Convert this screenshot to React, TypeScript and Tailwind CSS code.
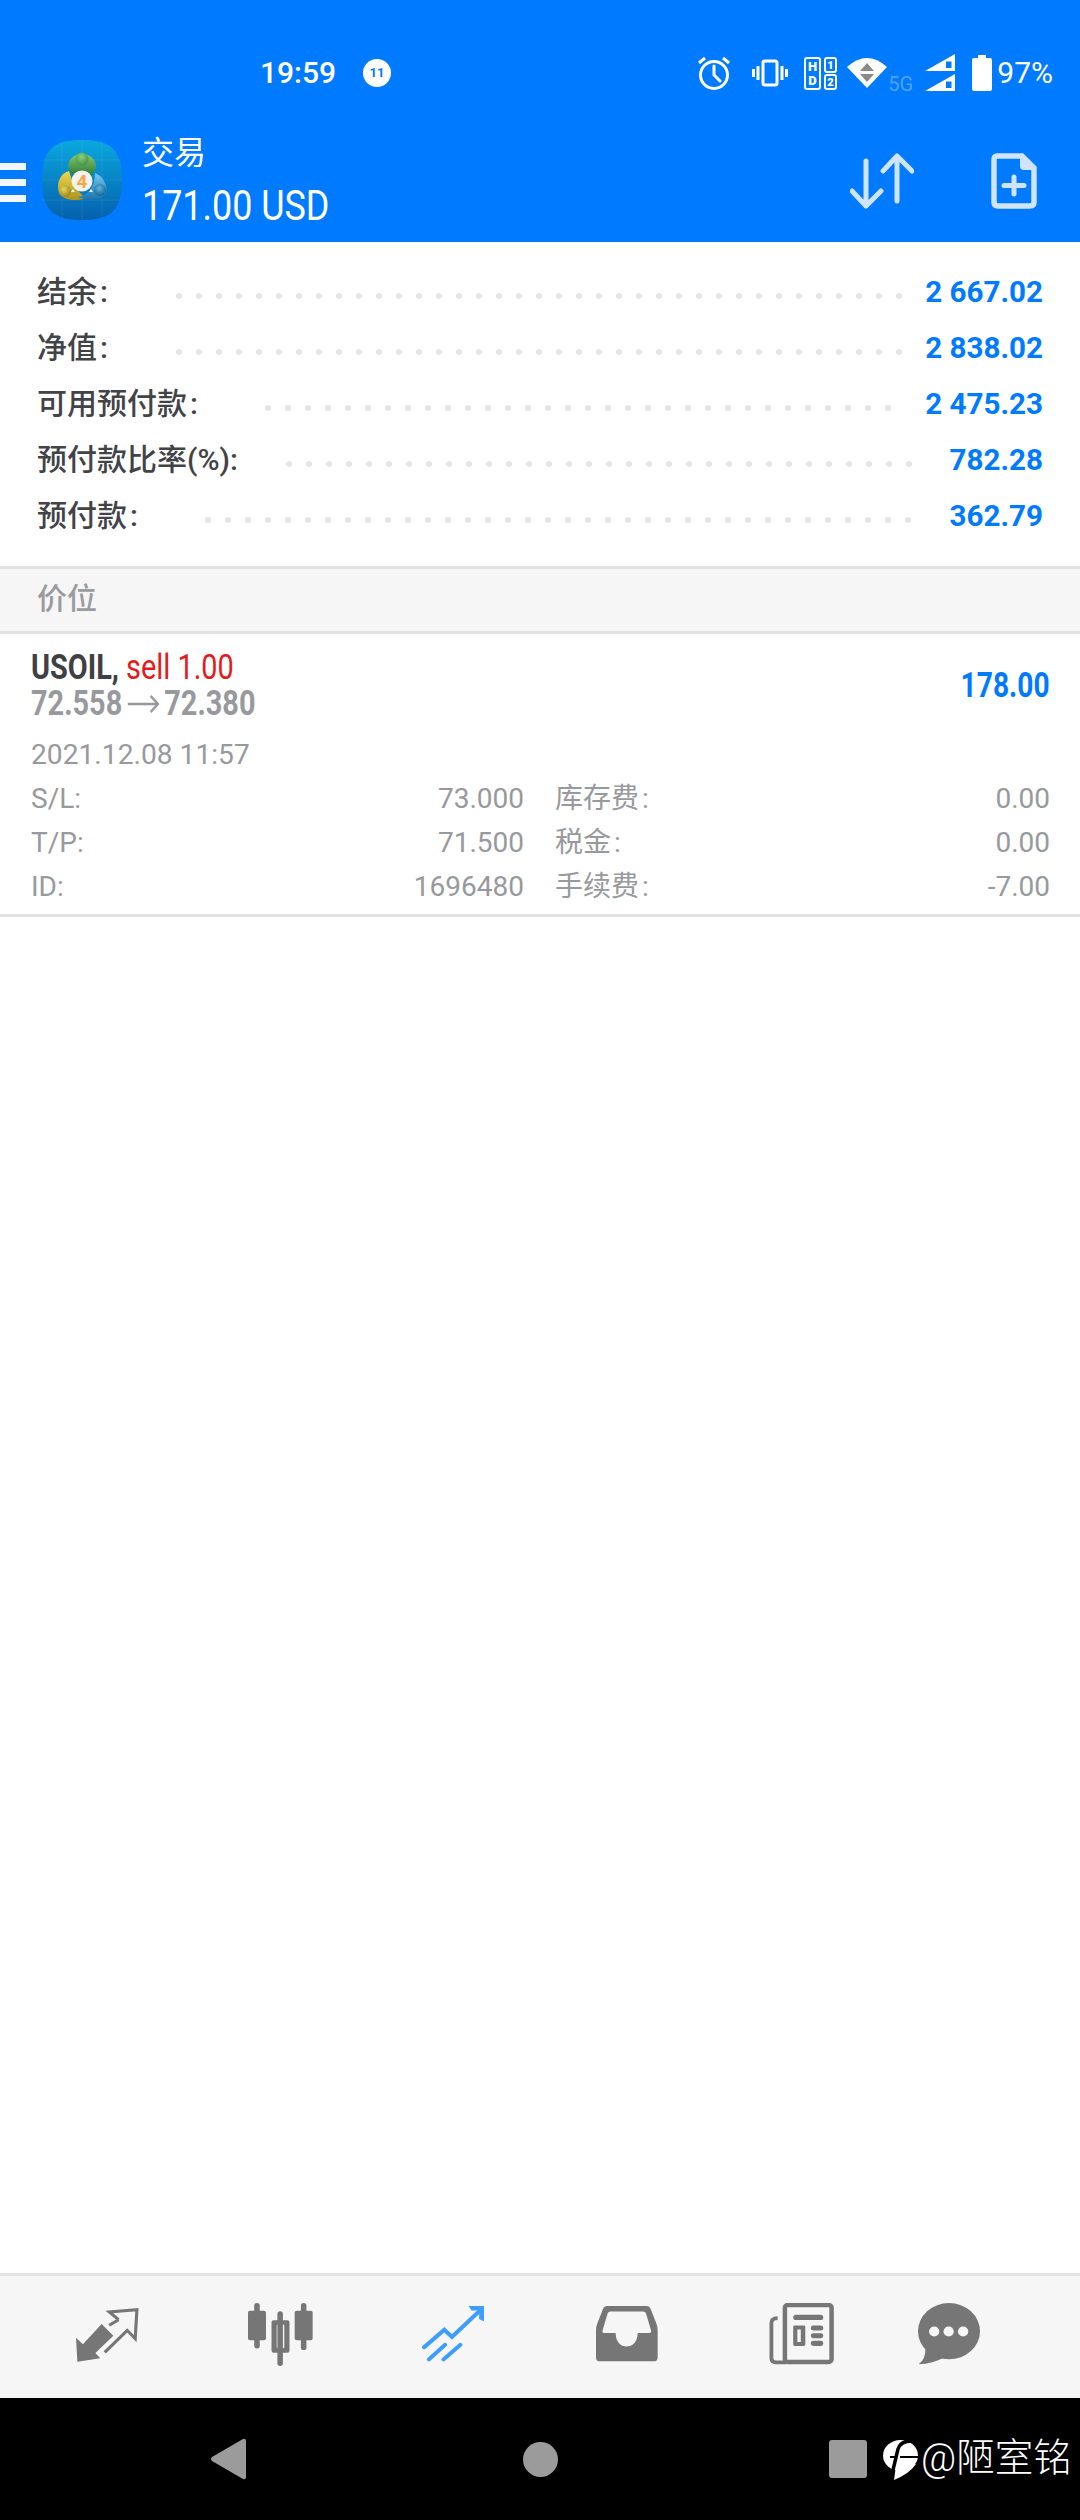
const FONT = "font-['Roboto','Noto_Sans_CJK_SC',sans-serif]";

type SummaryRow = {
  label: string;
  colon: string;
  value: string;
  labelWidth: string;
  dots: number;
};

const summaryRows: SummaryRow[] = [
  { label: "结余", colon: "ml-[3px]", value: "2 667.02", labelWidth: "w-[139px]", dots: 37 },
  { label: "净值", colon: "ml-[3px]", value: "2 838.02", labelWidth: "w-[139px]", dots: 37 },
  { label: "可用预付款", colon: "ml-[3px]", value: "2 475.23", labelWidth: "w-[228px]", dots: 32 },
  { label: "预付款比率(%)", colon: "ml-0", value: "782.28", labelWidth: "w-[249px]", dots: 32 },
  { label: "预付款", colon: "ml-[3px]", value: "362.79", labelWidth: "w-[168px]", dots: 36 },
];

const details = [
  { label: "S/L:", value: "73.000", feeLabel: "库存费", fee: "0.00" },
  { label: "T/P:", value: "71.500", feeLabel: "税金", fee: "0.00" },
  { label: "ID:", value: "1696480", feeLabel: "手续费", fee: "-7.00" },
];

function AppLogo() {
  return (
    <svg width="80" height="80" viewBox="0 0 80 80" className="ml-[16px] shrink-0">
      <defs>
        <linearGradient id="mt-bg" x1="0" y1="0" x2="0" y2="1">
          <stop offset="0" stopColor="#0aa8de" />
          <stop offset="1" stopColor="#0560ae" />
        </linearGradient>
        <linearGradient id="mt-green" x1="0" y1="0" x2="0" y2="1">
          <stop offset="0" stopColor="#86c971" />
          <stop offset="1" stopColor="#2b7a37" />
        </linearGradient>
        <linearGradient id="mt-yellow" x1="0" y1="0" x2="0" y2="1">
          <stop offset="0" stopColor="#ecd94f" />
          <stop offset="1" stopColor="#ad9320" />
        </linearGradient>
        <linearGradient id="mt-blue" x1="0" y1="0" x2="0" y2="1">
          <stop offset="0" stopColor="#79c8ee" />
          <stop offset="1" stopColor="#1b74ab" />
        </linearGradient>
        <radialGradient id="mt-head-green" cx="0.45" cy="0.35" r="0.7">
          <stop offset="0" stopColor="#8fd07c" />
          <stop offset="1" stopColor="#3c8f42" />
        </radialGradient>
        <radialGradient id="mt-head-yellow" cx="0.4" cy="0.35" r="0.7">
          <stop offset="0" stopColor="#e8d65a" />
          <stop offset="1" stopColor="#98821c" />
        </radialGradient>
        <radialGradient id="mt-head-blue" cx="0.45" cy="0.35" r="0.7">
          <stop offset="0" stopColor="#5fb4dc" />
          <stop offset="1" stopColor="#125f90" />
        </radialGradient>
      </defs>
      <path d="M40 0C69 0 80 10 80 40S69 80 40 80 0 70 0 40 11 0 40 0Z" fill="url(#mt-bg)" />
      <path d="M20 1V79M40 0V80M60 1V79M0 20H80M0 40H80M0 60H80" stroke="#fff" strokeOpacity="0.07" strokeWidth="1" />
      <path d="M26 28C26 18 33 14 40 14S54 18 54 28L49 36H31Z" fill="url(#mt-green)" />
      <circle cx="40" cy="19" r="6.500" fill="url(#mt-head-green)" />
      <path d="M27 31C18 33 14 44 17 53 20 60 34 62 44 58 38 54 31 46 27 31Z" fill="url(#mt-yellow)" />
      <circle cx="23" cy="51" r="6" fill="url(#mt-head-yellow)" />
      <path d="M53 33C61 36 66 45 64 53 60 60 48 62 36 57 46 56 53 47 53 33Z" fill="url(#mt-blue)" />
      <circle cx="58" cy="50" r="6" fill="url(#mt-head-blue)" />
      <path d="M31 49L33 52H29ZM49 49L47 52H51Z" fill="#eef3f0" />
      <circle cx="40" cy="41" r="10.500" fill="#f3f2ee" />
      <text x="40" y="48" textAnchor="middle" fontSize="19" fontWeight="700" fill="#f4a84a" fontFamily="Roboto">
        4
      </text>
    </svg>
  );
}

function StatusIcons() {
  return (
    <div className="flex items-center">
      <svg width="34" height="36" viewBox="0 0 34 36" fill="none" stroke="#fff" strokeWidth="3">
        <circle cx="17" cy="20" r="13.500" />
        <path d="M17 11V20L23 26" strokeLinecap="round" />
        <path d="M2 8L8 3M32 8L26 3" />
      </svg>
      <svg width="36" height="28" viewBox="0 0 36 28" fill="none" stroke="#fff" strokeWidth="3" className="ml-[21px]">
        <rect x="11" y="2" width="14" height="24" rx="2" />
        <path d="M6 7V21M30 7V21M1.500 10V18M34.500 10V18" />
      </svg>
      <svg width="33" height="33" viewBox="0 0 33 33" className="ml-[16px]">
        <g fill="none" stroke="#fff" strokeWidth="2">
          <rect x="1" y="1" width="15" height="31" rx="2" />
          <rect x="21" y="1" width="11" height="14" rx="2" />
          <rect x="21" y="18" width="11" height="14" rx="2" />
        </g>
        <g fill="#fff" fontFamily="Roboto" fontWeight="900" textAnchor="middle">
          <text x="8.500" y="14" fontSize="13">H</text>
          <text x="8.500" y="28" fontSize="13">D</text>
          <text x="26.500" y="12" fontSize="11">1</text>
          <text x="26.500" y="29" fontSize="11">2</text>
        </g>
      </svg>
      <svg width="40" height="32" viewBox="0 0 40 32" className="ml-[10px] mt-[-2px]">
        <path d="M0 11Q20 -7 40 11L20 32Z" fill="#fff" />
        <path d="M20 7L27 15H13Z M13 18H27L20 26Z" fill="#8a8a86" />
      </svg>
      <span className="ml-[1px] mt-[22px] w-[26px] text-[20px] leading-[20px] text-[#4fa3ff]">5G</span>
      <svg width="31" height="38" viewBox="0 0 31 38" className="ml-[11px]">
        <path d="M0 17L30 0V17ZM0 37L30 20V37Z" fill="#fff" />
        <path d="M21 7.500H26.500V14H21ZM21 27.500H26.500V34H21Z" fill="#007aff" />
      </svg>
      <svg width="20" height="36" viewBox="0 0 20 36" className="ml-[16px]">
        <path d="M6 0H14V3H18Q20 3 20 5V34Q20 36 18 36H2Q0 36 0 34V5Q0 3 2 3H6Z" fill="#fff" />
      </svg>
      <span className="ml-[5px] text-[30px] leading-[36px] text-white">97%</span>
    </div>
  );
}

function Header() {
  return (
    <header className="h-[242px] shrink-0 bg-[#007aff] text-white">
      <div className="flex h-[118px] items-center pl-[260px] pr-[27px] pt-[28px]">
        <span className="w-[103px] text-[30px] font-medium leading-[36px]">19:59</span>
        <span className="flex h-[28px] w-[28px] items-center justify-center rounded-full bg-white text-[13px] font-bold text-[#007aff]">
          11
        </span>
        <div className="flex-1" />
        <StatusIcons />
      </div>
      <div className="flex h-[124px] items-start">
        <div className="mt-[45px] flex w-[26px] flex-col gap-[9px]">
          <div className="h-[7px] bg-[#f2f7ff]" />
          <div className="h-[7px] bg-[#f2f7ff]" />
          <div className="h-[7px] bg-[#f2f7ff]" />
        </div>
        <div className="mt-[22px]">
          <AppLogo />
        </div>
        <div className="ml-[20px] mt-[15px]">
          <div className="text-[32px] leading-[40px]">交易</div>
          <div className="mt-[7px] origin-left scale-x-[0.835] whitespace-nowrap text-[43px] leading-[50px]">171.00 USD</div>
        </div>
        <svg width="64" height="56" viewBox="0 0 64 56" fill="none" stroke="#cfe4ff" strokeWidth="5" strokeLinecap="round" strokeLinejoin="round" className="ml-auto mt-[35px]">
          <path d="M16 8V53M2 38L16 53L31 38" />
          <path d="M47 3V48M33 18L47 3L62 18" />
        </svg>
        <svg width="46" height="56" viewBox="0 0 46 56" className="ml-[77px] mr-[43px] mt-[35px]">
          <path d="M6 3H31L43 15V49Q43 53 39 53H7Q3 53 3 49V7Q3 3 6 3Z" fill="none" stroke="#cfe4ff" strokeWidth="5.500" />
          <path d="M29 2L44 17H33Q29 17 29 13Z" fill="#cfe4ff" />
          <path d="M23 24V41M13 32.500H33" stroke="#cfe4ff" strokeWidth="5" strokeLinecap="round" />
        </svg>
      </div>
    </header>
  );
}

function Summary() {
  return (
    <section className="h-[324px] shrink-0 pl-[37px] pr-[37px] pt-[22px]">
      {summaryRows.map((row) => (
        <div key={row.label} className="flex h-[56px] items-center">
          <span className={`${row.labelWidth} shrink-0 text-[30px] font-medium leading-[40px] text-[#424347]`}>
            {row.label}
            <span className={row.colon}>:</span>
          </span>
          <div className="mt-[7px] flex gap-[14px]">
            {Array.from({ length: row.dots }).map((_, i) => (
              <span key={i} className="h-[6px] w-[6px] rounded-full bg-[#e6e6e6]" />
            ))}
          </div>
          <span className="ml-auto text-[29.6px] font-bold leading-[40px] text-[#007aff]">{row.value}</span>
        </div>
      ))}
    </section>
  );
}

function PositionItem() {
  return (
    <section className="h-[283px] shrink-0 border-b-[3px] border-[#e3e3e3] pl-[31px] pr-[30px]">
      <div className="flex items-center justify-between pt-[16px]">
        <div>
          <div className="origin-left scale-x-[0.825] whitespace-nowrap text-[35px] leading-[36px]">
            <span className="font-bold text-[#3f4044]">USOIL, </span>
            <span className="text-[#e31b1b]">sell 1.00</span>
          </div>
          <div className="flex h-[36px] origin-left scale-x-[0.825] items-center whitespace-nowrap text-[35px] font-bold leading-[36px] text-[#98999d]">
            <span>72.558</span>
            <svg width="39" height="18" viewBox="0 0 39 18" fill="none" stroke="#98999d" strokeWidth="2.500" className="mx-[6px]">
              <path d="M0 9H37M28 1L37 9L28 17" />
            </svg>
            <span>72.380</span>
          </div>
        </div>
        <span className="origin-right scale-x-[0.805] text-[35px] font-bold leading-[36px] text-[#007aff]">178.00</span>
      </div>
      <div className="mt-[11px] h-[44px] text-[28.2px] leading-[44px] text-[#98999d]">2021.12.08 11:57</div>
      {details.map((row) => (
        <div key={row.label} className="flex h-[44px] items-center text-[28px] leading-[44px] text-[#98999d]">
          <span>{row.label}</span>
          <span className="ml-auto w-[300px] text-right">{row.value}</span>
          <span className="ml-[31px] w-[160px]">
            {row.feeLabel}
            <span className="ml-[3px]">:</span>
          </span>
          <span className="w-[335px] text-right">{row.fee}</span>
        </div>
      ))}
    </section>
  );
}

function BottomTabs() {
  return (
    <nav className="flex h-[125px] shrink-0 items-start border-t-[3px] border-[#e3e3e3] bg-[#f6f6f6] pl-[76px]">
      <svg width="63" height="54" viewBox="222 145 182 162" preserveAspectRatio="none" className="mt-[32px]">
        <path d="M296 193L330 228L278 280L292 296L226 306L222 234L242 254Z" fill="#767676" />
        <path d="M345 180L318 157L398 150L393 237L370 212L305 278M345 180L318 197" fill="none" stroke="#767676" strokeWidth="9" />
      </svg>
      <svg width="65" height="63" viewBox="720 130 188 190" preserveAspectRatio="none" className="ml-[109px] mt-[27px]">
        <g fill="#767676">
          <rect x="720" y="153" width="52" height="89" rx="6" />
          <rect x="738" y="130" width="16" height="137" rx="8" />
          <rect x="855" y="153" width="52" height="89" rx="6" />
          <rect x="873" y="130" width="16" height="142" rx="8" />
          <rect x="805" y="155" width="16" height="165" rx="8" />
          <path fillRule="evenodd" d="M794 182H834Q840 182 840 188V274Q840 280 834 280H794Q788 280 788 274V188Q788 182 794 182ZM807 195Q803 195 803 199V263Q803 267 807 267H821Q825 267 825 263V199Q825 195 821 195Z" />
        </g>
      </svg>
      <svg width="62" height="56" viewBox="1226 138 178 170" preserveAspectRatio="none" className="ml-[109px] mt-[30px]">
        <g fill="none" stroke="#3d9eff" strokeWidth="12" strokeLinecap="round">
          <path d="M1232 263L1290 210L1312 232L1392 152" />
          <path d="M1246 300L1292 256M1288 300L1336 256" />
        </g>
        <path d="M1360 138H1404V184L1390 178V152H1368Z" fill="#3d9eff" />
      </svg>
      <svg width="62" height="56" viewBox="163 138 180 170" preserveAspectRatio="none" className="ml-[112px] mt-[30px]">
        <path
          fillRule="evenodd"
          fill="#767676"
          d="M195 138H310Q318 138 322 148L338 190Q342 200 342 212V295Q342 306 330 306H175Q163 306 163 295V212Q163 200 167 190L183 148Q187 138 195 138ZM205 155H300Q306 155 308 160L323 212Q324 220 316 220H284C284 275 220 275 220 220H188Q180 220 182 212L197 160Q199 155 205 155Z"
        />
      </svg>
      <svg width="65" height="62" viewBox="665 130 188 185" preserveAspectRatio="none" className="ml-[111px] mt-[27px]">
        <g fill="none" stroke="#767676">
          <rect x="711" y="136" width="135" height="170" rx="8" strokeWidth="13" />
          <path d="M690 175Q672 175 672 190V295Q672 307 685 307H715" strokeWidth="11" />
        </g>
        <g fill="#767676">
          <rect x="735" y="165" width="87" height="16" rx="8" />
          <path fillRule="evenodd" d="M739 197H766Q770 197 770 201V254Q770 258 766 258H739Q735 258 735 254V201Q735 197 739 197ZM747 209V246H757V209Z" />
          <rect x="786" y="197" width="36" height="15" rx="7" />
          <rect x="786" y="220" width="36" height="15" rx="7" />
          <rect x="786" y="243" width="36" height="15" rx="7" />
        </g>
      </svg>
      <svg width="62" height="62" viewBox="1098 130 180 185" preserveAspectRatio="none" className="ml-[84px] mt-[27px]">
        <ellipse cx="1188" cy="214" rx="90" ry="84" fill="#767676" />
        <path d="M1120 265Q1120 298 1100 313Q1140 312 1175 292Z" fill="#767676" />
        <g fill="#f6f6f6">
          <circle cx="1145" cy="215" r="15" />
          <circle cx="1187" cy="215" r="15" />
          <circle cx="1229" cy="215" r="15" />
        </g>
      </svg>
    </nav>
  );
}

function SystemBar() {
  return (
    <div className="flex h-[122px] shrink-0 items-center bg-black pl-[210px]">
      <svg width="36" height="42" viewBox="0 0 36 42">
        <path d="M33 1Q36 0 36 3V39Q36 42 33 41L2 23Q0 21 2 19Z" fill="#9b9b9b" />
      </svg>
      <div className="ml-[277px] h-[35px] w-[35px] rounded-full bg-[#9b9b9b]" />
      <div className="ml-[271px] h-[38px] w-[38px] rounded-[3px] bg-[#9b9b9b]" />
      <svg width="35" height="42" viewBox="0 0 35 42" className="ml-[16px] mt-[4px]">
        <ellipse cx="17.500" cy="15.500" rx="17.500" ry="15.500" fill="#fff" />
        <path d="M13 26L11 40Q26 34 33 24Z" fill="#fff" />
        <path d="M31 1Q18 0 15 9L10 30" fill="none" stroke="#000" strokeWidth="3.500" />
        <path d="M7 17H13M17 17H35" fill="none" stroke="#000" strokeWidth="2" />
      </svg>
      <span className="ml-[3px] mt-[-2px] whitespace-nowrap text-[38.500px] font-light leading-[44px] text-white">@陋室铭</span>
    </div>
  );
}

export default function App() {
  return (
    <div className={`${FONT} flex h-[2520px] w-[1080px] flex-col overflow-hidden bg-white`}>
      <Header />
      <Summary />
      <div className="flex h-[68px] shrink-0 items-center border-y-[3px] border-[#e3e3e3] bg-[#f6f6f6] pb-[4px] pl-[37px] text-[30px] font-medium text-[#9a9b9f]">
        价位
      </div>
      <PositionItem />
      <div className="flex-1" />
      <BottomTabs />
      <SystemBar />
    </div>
  );
}
